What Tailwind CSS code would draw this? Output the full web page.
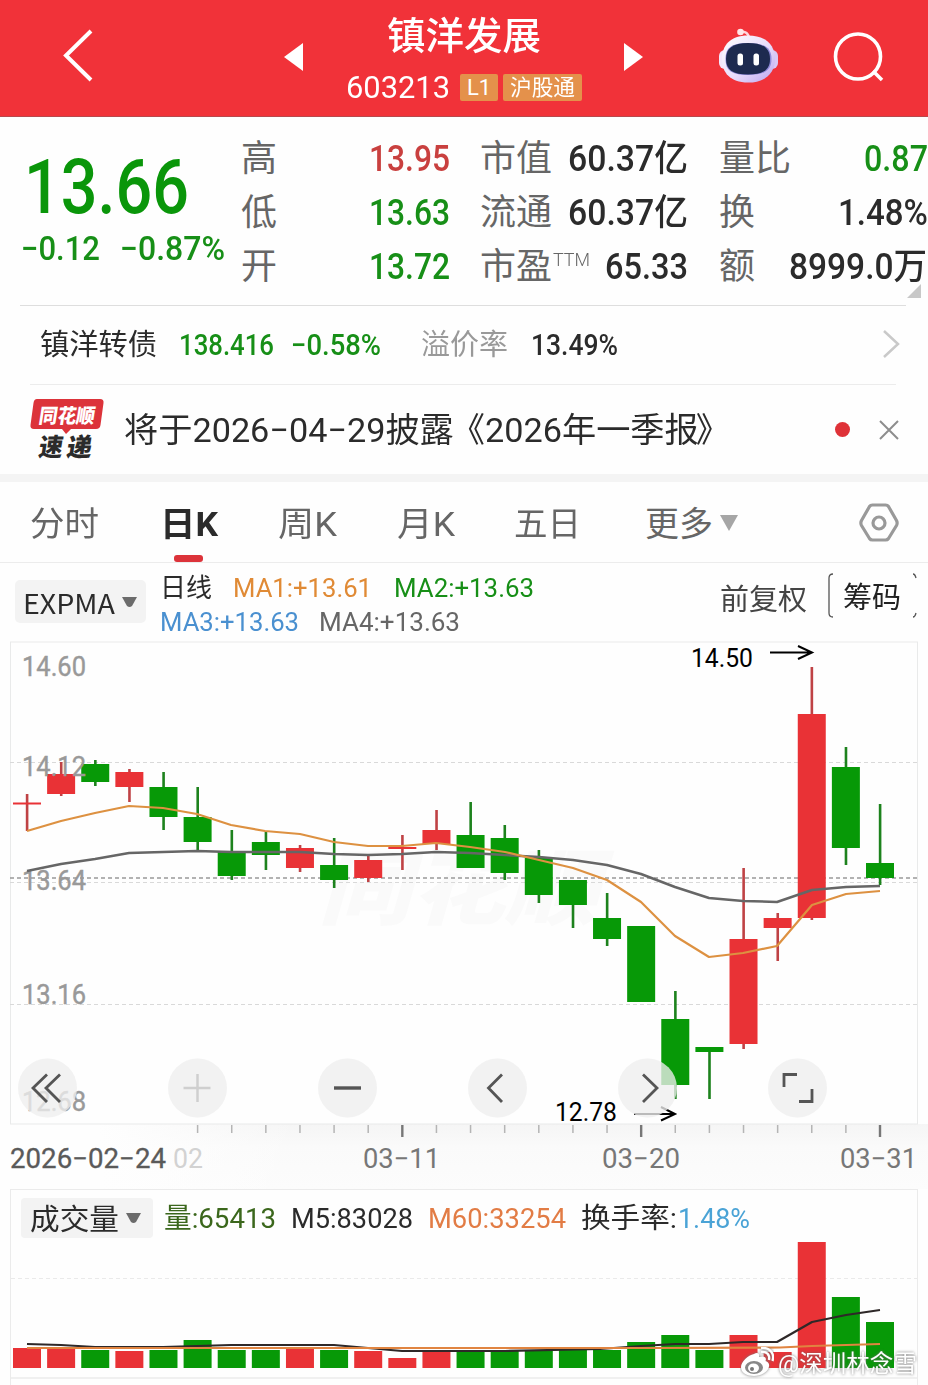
<!DOCTYPE html>
<html lang="zh-CN">
<head>
<meta charset="utf-8">
<title>镇洋发展 603213</title>
<script src="https://cdn.jsdelivr.net/npm/@tailwindcss/browser@4"></script>
</head>
<body class="w-[928px] h-[1385px] overflow-hidden bg-[#fefefe] text-[#2b2b2b] font-['Roboto','Noto_Sans_CJK_SC',sans-serif] whitespace-nowrap">

<header class="h-[117px] bg-[#f13239] text-white flex border-b border-[#b8484c]">
  <div class="w-[284px] pl-[60px] pt-[26px]">
    <svg class="w-9 h-[60px]" viewBox="0 0 36 60" fill="none" stroke="#fff" stroke-width="4"><path d="M31 5 6 29.500 31 54"/></svg>
  </div>
  <div class="w-[62px] pt-[43px]"><svg class="w-5 h-7" viewBox="0 0 20 28"><path d="M19 0v28L0 14z" fill="#fff"/></svg></div>
  <div class="w-[240px]">
    <div class="h-[60px] pt-[10px] pl-[41px] text-[38px] leading-[52px] font-medium"><span data-w="154">镇洋发展</span></div>
    <div class="flex items-center h-[54px]">
      <span data-w="104" class="text-[32px] leading-[56px]">603213</span>
      <span class="ml-[10px] w-[38px] h-[27px] shrink-0 rounded-[2px] bg-[#e4914b] text-[22px] leading-[27px] text-center">L1</span>
      <span class="ml-[5px] w-[79px] h-[27px] shrink-0 rounded-[2px] bg-[#e4914b] text-[22px] leading-[27px] pl-[7px]"><span data-w="65">沪股通</span></span>
    </div>
  </div>
  <div class="w-[130px] pl-[37px] pt-[43px]"><svg class="w-5 h-7" viewBox="0 0 20 28"><path d="M1 0v28L20 14z" fill="#fff"/></svg></div>
  <div class="w-[114px] pt-[26px]">
    <svg class="w-[64px] h-[60px]" viewBox="716 26 64 60">
      <defs><linearGradient id="shell" x2="1" y2="1"><stop offset="0" stop-color="#fff"/><stop offset=".55" stop-color="#e9dcfb"/><stop offset="1" stop-color="#b9a4ee"/></linearGradient></defs>
      <path d="M741 32q6-1 8 5" fill="none" stroke="#ffd5dc" stroke-width="2.500"/>
      <circle cx="740.500" cy="32" r="3.300" fill="#ffe6e8"/>
      <rect x="719" y="50" width="12" height="19" rx="6" fill="#f3e6fb"/>
      <rect x="766" y="50" width="12" height="19" rx="6" fill="#d9c8f5"/>
      <path d="M748 35.500c18 0 27 10 27 23.500s-9 23.500-27 23.500-26-10-26-23.500 8-23.500 26-23.500z" fill="url(#shell)"/>
      <path d="M748 43c17 0 23.500 5 23.500 16S765 75 748 75s-22.500-5-22.500-16S731 43 748 43z" fill="#8f8ad8"/>
      <path d="M748 43c15 0 22 5 22 16s-7 15.500-22 15.500S726 70 726 59s7-16 22-16z" fill="#1d2a4f"/>
      <rect x="737.500" y="53.500" width="5.500" height="12" rx="2.500" fill="#fff"/>
      <rect x="753.500" y="53.500" width="5.500" height="12" rx="2.500" fill="#fff"/>
    </svg>
  </div>
  <div class="pt-[30px]"><svg class="w-14 h-14" viewBox="830 30 56 56" fill="none" stroke="#fff" stroke-width="3.600"><circle cx="858" cy="56.500" r="22.500"/><path d="m873 71 9 9"/></svg></div>
</header>

<section class="h-[188px] flex text-[36px] leading-[54px] pt-[15px]">
  <div class="w-[241px] shrink-0">
    <div class="pl-[24px] pt-[17px] h-[88px] text-[76px] leading-[76px] font-medium text-[#0a960a]"><span data-w="165">13.66</span></div>
    <div class="flex pl-[21px] h-[54px] text-[33px] leading-[58px] text-[#178f17] font-medium"><span data-w="79">−0.12</span><span class="ml-[20px]" data-w="105">−0.87%</span></div>
  </div>
  <div class="w-[39px] shrink-0 text-[#666]"><div>高</div><div>低</div><div>开</div></div>
  <div class="w-[170px] shrink-0 font-medium text-[#178f17] pl-[89px]">
    <div class="flex"><span data-w="81" class="text-[#c9403f]">13.95</span></div><div class="flex"><span data-w="81">13.63</span></div><div class="flex"><span data-w="81">13.72</span></div>
  </div>
  <div class="w-[238px] shrink-0 pl-[30px]">
    <div class="flex justify-between"><span class="text-[#666]">市值</span><span data-w="120" class="font-medium">60.37亿</span></div>
    <div class="flex justify-between"><span class="text-[#666]">流通</span><span data-w="120" class="font-medium">60.37亿</span></div>
    <div class="flex justify-between"><span class="text-[#666] flex">市盈<span class="text-[19px] leading-[40px] pl-[1px] font-light" data-w="38">TTM</span></span><span data-w="83" class="font-medium">65.33</span></div>
  </div>
  <div class="w-[240px] shrink-0 pl-[31px] relative">
    <div class="flex justify-between"><span class="text-[#666]">量比</span><span data-w="64" class="font-medium text-[#178f17]">0.87</span></div>
    <div class="flex justify-between"><span class="text-[#666]">换</span><span data-w="90" class="font-medium">1.48%</span></div>
    <div class="flex justify-between pr-[1px]"><span class="text-[#666]">额</span><span data-w="138" class="font-medium">8999.0万</span></div>
    <svg class="absolute right-[7px] top-[152px] w-[14px] h-[14px]" viewBox="0 0 14 14"><path d="M14 0v14H0z" fill="#c8c8c8"/></svg>
  </div>
</section>

<section class="ml-[20px] mr-[22px] h-[79px] border-t border-[#dedede] flex items-center text-[29px] pl-[20px] leading-[76px]">
  <span data-w="117">镇洋转债</span>
  <span data-w="95" class="ml-[22px] text-[29px] font-medium text-[#178f17]">138.416</span>
  <span data-w="90" class="ml-[17px] text-[29px] font-medium text-[#178f17]">−0.58%</span>
  <span data-w="87" class="ml-[40px] text-[#999]">溢价率</span>
  <span data-w="87" class="ml-[23px] text-[29px] font-medium">13.49%</span>
  <svg class="ml-auto mr-[6px] w-[18px] h-[32px]" viewBox="0 0 18 32" fill="none" stroke="#c9c9c9" stroke-width="2.500"><path d="m2 2 14 13L2 28"/></svg>
</section>

<section class="ml-[30px] mr-[32px] h-[90px] border-t border-[#ececec] flex items-center">
  <svg class="w-[74px] h-[64px] shrink-0" viewBox="30 398 74 64">
    <path d="M37 399h63q4 0 3.500 4l-3 22q-.5 4-4.500 4H71l-5 5-4-5H34q-4 0-3.500-4l3-22q.5-4 3.500-4z" fill="#dc333a"/>
    <g transform="skewX(-9)" font-family="Noto Sans CJK SC" font-weight="900">
      <text x="105" y="423" font-size="20" textLength="56" lengthAdjust="spacingAndGlyphs" fill="#fff">同花顺</text>
      <text x="110" y="456" font-size="25" fill="#2b2b2b" textLength="24" lengthAdjust="spacingAndGlyphs">速</text>
      <text x="138" y="456" font-size="25" fill="#2b2b2b" textLength="25" lengthAdjust="spacingAndGlyphs">递</text>
    </g>
  </svg>
  <span data-w="606" class="ml-[20px] text-[34px] leading-[86px] pt-[1px]">将于2026−04−29披露<span class="-ml-[3px]">《</span>2026年一季报<span class="-ml-[3px]">》</span></span>
  <span class="ml-auto w-[15px] h-[15px] rounded-full bg-[#df3238]"></span>
  <svg class="ml-[28px] w-[22px] h-[22px] mr-[-4px]" viewBox="0 0 22 22" stroke="#8d8d8d" stroke-width="2"><path d="m2 2 18 18M20 2 2 20"/></svg>
</section>

<div class="h-[8px] bg-[#f4f4f4]"></div>

<nav class="h-[81px] border-b border-[#ececec] flex text-[34px] leading-[85px] text-[#666] relative pl-[30px]">
  <span data-w="69">分时</span>
  <span data-w="58" class="ml-[61px] font-bold text-[#2b2b2b]">日K</span>
  <span data-w="59" class="ml-[60px]">周K</span>
  <span data-w="58" class="ml-[60px]">月K</span>
  <span data-w="67" class="ml-[59px]">五日</span>
  <span data-w="68" class="ml-[64px]">更多</span>
  <svg class="ml-[7px] mt-[33px] w-[18px] h-[16px]" viewBox="0 0 18 16"><path d="M0 0h18L9 16z" fill="#a6a6a6"/></svg>
  <svg class="ml-auto mr-[28px] mt-[20px] w-[42px] h-[42px]" viewBox="0 0 42 42" fill="none" stroke="#999" stroke-width="3.200" stroke-linejoin="round"><path d="M11.500 4.500q1-1.500 3-1.500h13q2 0 3 1.500l8 14q1.300 2.500 0 5l-8 13q-1 1.500-3 1.500h-13q-2 0-3-1.500l-8-13q-1.300-2.500 0-5z"/><circle cx="21" cy="21" r="6"/></svg>
  <i class="absolute left-[174px] bottom-0 w-[29px] h-[7px] rounded-[3px] bg-[#dc333a]"></i>
</nav>

<section class="h-[78px] flex">
  <div class="mt-[17px] ml-[15px] w-[131px] h-[43px] rounded-[5px] bg-[#f3f3f3] flex items-center pl-[8px]">
    <span data-w="92" class="text-[27px] leading-[43px] pt-[1px] font-['Noto_Sans_CJK_SC']">EXPMA</span>
    <svg class="ml-[7px] w-[15px] h-[11px] mt-[1px]" viewBox="0 0 15 11"><path d="M0 0h15l-5 9q-2.500 2-5 0z" fill="#6b6b6b"/></svg>
  </div>
  <div class="ml-[14px] w-[560px] pt-[8px] text-[26px]">
    <div class="flex h-[34px] leading-[34px]"><span data-w="52">日线</span><span data-w="139" class="ml-[21px] text-[#e08a35]">MA1:+13.61</span><span data-w="140" class="ml-[22px] text-[#178f17]">MA2:+13.63</span></div>
    <div class="flex h-[34px] leading-[34px]"><span data-w="139" class="text-[#4a90d0]">MA3:+13.63</span><span data-w="141" class="ml-[20px] text-[#666]">MA4:+13.63</span></div>
  </div>
  <span data-w="87" class="text-[29px] leading-[74px] text-[#444]">前复权</span>
  <div class="ml-[21px] mt-[10px] w-[90px] h-[46px] relative">
    <svg class="absolute inset-0" width="90" height="46" fill="none" stroke="#555" stroke-width="1.300"><path d="M5 1Q1 1 1 5v35q0 4 4 4M85 1q2 0 3 4M85 44q2 0 3-4"/></svg>
    <span class="block pl-[15px] text-[29px] leading-[50px] text-[#222]"><span data-w="58">筹码</span></span>
  </div>
</section>

<section class="h-[548px]">
  <svg id="kline" class="block" width="928" height="548" viewBox="0 641 928 548" font-family="Roboto, Noto Sans CJK SC, sans-serif">
    <defs>
      <linearGradient id="fade" x2="0" y2="1"><stop offset="0" stop-color="#f5f5f5"/><stop offset=".35" stop-color="#fafafa"/><stop offset="1" stop-color="#fcfcfc"/></linearGradient>
      <linearGradient id="cover"><stop offset="0" stop-color="#fefefe"/><stop offset="1" stop-color="#fefefe" stop-opacity="0"/></linearGradient>
    </defs>
    <rect x="100" y="1124" width="828" height="65" fill="url(#fade)"/>
    <rect x="99" y="1123" width="200" height="67" fill="url(#cover)"/>
    <text x="318" y="918" font-size="82" font-weight="900" font-style="italic" fill="#fafafa" textLength="280" lengthAdjust="spacingAndGlyphs">同花顺</text>
    <rect x="10.500" y="642" width="907" height="482" fill="none" stroke="#e9eaea"/>
    <g stroke="#d9d9d9" stroke-dasharray="4 3"><path d="M10 762.500H917M10 882.500H917M10 1004.500H917"/></g>
    <path d="M10 878H917" stroke="#999" stroke-width="1.400" stroke-dasharray="4 3"/>
    <g id="candles"></g>
    <g font-size="27" fill="#999" stroke="#999" stroke-width=".4">
      <text x="22" y="675.500" textLength="64" lengthAdjust="spacingAndGlyphs">14.60</text>
      <text x="22" y="775.500" textLength="64" lengthAdjust="spacingAndGlyphs">14.12</text>
      <text x="22" y="889.500" textLength="64" lengthAdjust="spacingAndGlyphs">13.64</text>
      <text x="22" y="1003.500" textLength="64" lengthAdjust="spacingAndGlyphs">13.16</text>
      <text x="22" y="1110.500" textLength="64" lengthAdjust="spacingAndGlyphs">12.68</text>
    </g>
    <g fill="none" stroke-linejoin="round">
      <polyline stroke="#666" stroke-width="2.500" points="27,871 61,864 95,859 129,853 163,852 197,851 231,852 300,852 334,854 368,855 402,854 436,852 470,853 505,855 539,857 573,860 607,865 641,874 675,887 709,898 743,901 777,902 812,890 846,887 880,886"/>
      <polyline stroke="#dd9141" stroke-width="2.200" points="27,831 61,821 95,813 129,806 163,808 197,814 231,825 265,831 300,834 334,842 368,846 402,846 436,843 470,847 505,852 539,860 573,868 607,880 641,902 675,936 709,957 743,953 777,946 812,905 846,894 880,891"/>
    </g>
    <g font-size="25" fill="#000">
      <text x="691" y="667" textLength="62" lengthAdjust="spacingAndGlyphs">14.50</text>
      <text x="555" y="1120.500" textLength="62" lengthAdjust="spacingAndGlyphs">12.78</text>
    </g>
    <g fill="none" stroke="#000" stroke-width="2"><path d="M770 652.500h41M798 646l14 6.500-14 6.500M634 1114h41M661 1107l14 7-14 6.500"/></g>
    <g fill="#eee" fill-opacity=".78">
      <circle cx="47.500" cy="1088" r="29.500"/><circle cx="197.500" cy="1088" r="29.500"/><circle cx="347.500" cy="1088" r="29.500"/><circle cx="497.500" cy="1088" r="29.500"/><circle cx="647.500" cy="1088" r="29.500"/><circle cx="797.500" cy="1088" r="29.500"/>
    </g>
    <g fill="none" stroke="#555" stroke-width="2.800">
      <path d="M47 1074.500 33 1088l14 14M60 1074.500 46 1088l14 14"/>
      <path stroke="#cfcfcf" stroke-width="2.500" d="M183.500 1088h27M197.500 1074v28"/>
      <path stroke-width="3.400" d="M334 1088h27"/>
      <path d="M502 1074.500 488.500 1088l13.500 14M643 1074.500l14 13.500-14 14"/>
      <path d="M784 1087v-12.500h13M799 1101.500h13V1089"/>
    </g>
    <g id="ticks"></g>
    <g font-size="27" fill="#777">
      <text x="10" y="1168" fill="#5a5a5a" stroke="#5a5a5a" stroke-width=".3" textLength="156" lengthAdjust="spacingAndGlyphs">2026−02−24</text>
      <text x="173" y="1168" fill="#d2d2d2" textLength="30" lengthAdjust="spacingAndGlyphs">02</text>
      <text x="363" y="1168" textLength="77" lengthAdjust="spacingAndGlyphs">03−11</text>
      <text x="602" y="1168" textLength="78" lengthAdjust="spacingAndGlyphs">03−20</text>
      <text x="840" y="1168" textLength="77" lengthAdjust="spacingAndGlyphs">03−31</text>
    </g>
  </svg>
</section>

<section class="ml-[10px] mr-[10px] h-[196px] border border-b-0 border-[#ebebeb] relative">
  <div class="h-[56px] flex items-center text-[28px] leading-[58px] pl-[10px]">
    <div class="w-[132px] h-[40px] shrink-0 rounded-[4px] bg-[#f3f3f3] flex items-center pl-[9px]"><span data-w="89" class="text-[29px] leading-[40px] pt-[3px]">成交量</span><svg class="ml-[7px] w-[15px] h-[11px]" viewBox="0 0 15 11"><path d="M0 0h15l-5 9q-2.500 2-5 0z" fill="#6b6b6b"/></svg></div>
    <span data-w="112" class="ml-[11px] pt-[2px] text-[#3b671c]">量:65413</span>
    <span data-w="122" class="ml-[15px] pt-[2px]">M5:83028</span>
    <span data-w="138" class="ml-[15px] pt-[2px] text-[#e27c45]">M60:33254</span>
    <span data-w="96" class="ml-[15px] pt-[2px]">换手率:</span>
    <span data-w="72" class="ml-[1px] pt-[2px] text-[#4aa3d6]">1.48%</span>
  </div>
  <svg id="volume" class="block overflow-visible" width="906" height="139" viewBox="11 1246 906 139">
    <path d="M11 1278.500H917" stroke="#eaeaea" stroke-dasharray="4 3"/>
    <path d="M11 1378H917" stroke="#ebebeb" stroke-width="1.500"/>
    <g id="bars"></g>
    <g fill="none" stroke-linejoin="round" stroke-width="2.200">
      <polyline stroke="#2e2828" points="27,1344 61,1345 95,1347 163,1347 197,1346 231,1345 334,1345 368,1348 402,1351 505,1351 600,1349 641,1346 675,1344 709,1344 743,1342 777,1342 812,1322 846,1315 880,1310"/>
      <polyline stroke="#e08440" points="27,1348 650,1348 780,1347.500 812,1346 880,1344"/>
    </g>
  </svg>
  <div class="absolute left-[729px] top-[154px] flex items-center text-white [text-shadow:0_0_3px_#666]">
    <svg class="w-[34px] h-[32px] shrink-0" viewBox="0 0 34 32"><g style="filter:drop-shadow(0 0 1.500px #777)"><path d="M14 7c3-2 6-1 5 3 5-1.500 8 0 6.500 4 3 1 4 3 3.500 5.500C28 25 21 29 14 29S1 26 1 20C1 15 8 8 14 7z" fill="#fff"/><path d="M21 5c6-1 9 3 8 8M21 1c9-1 14 6 11.500 13" fill="none" stroke="#fff" stroke-width="2.400"/></g><ellipse cx="14" cy="20.500" rx="9" ry="6.500" fill="#888"/><ellipse cx="13.500" cy="21" rx="5.500" ry="4.500" fill="#fff"/><circle cx="12" cy="22" r="2" fill="#777"/></svg>
    <span data-w="139" class="ml-[4px] pt-[2px] text-[24px] leading-[36px]">@深圳林念雪</span>
  </div>
</section>

<script>
// [direction, body top, body bottom, high, low, volume top]
const days = [
  ['r',802.5,804.5,794,831,1348],['r',774,794,762,796,1347],['g',764,782,760,786,1350],['r',772,787,769,802,1351],
  ['g',787,817,772,830,1350],['g',817,842,787,850,1340],['g',852,876,830,880,1350],['g',842,855,832,870,1350],
  ['r',848,868,845,872,1349],['g',865,880,838,888,1350],['r',860,878,856,882,1351],['r',847,849,835,870,1358],
  ['r',830,844,810,850,1351],['g',835,868,802,868,1350],['g',838,873,825,880,1350],['g',858,895,850,903,1350],
  ['g',880,905,880,928,1350],['g',918,939,893,946,1350],['g',926,1002,926,1002,1342],['g',1019,1085,991,1099,1335],
  ['g',1047,1052,1047,1099,1350],['r',939,1044,868,1049,1335],['r',918,928,913,961,1352],['r',714,918,667,920,1242],
  ['g',767,848,747,865,1297],['g',863,878,804,885,1322]
];
const color = { r: '#e93236', g: '#079907' }, wick = { r: '#bf4245', g: '#1d821d' };
let candles = '', bars = '', ticks = '';
days.forEach(([d, top, bottom, high, low, vol], i) => {
  const x = 27 + i * 34.12;
  candles += `<rect x="${x - 1.2}" y="${high}" width="2.6" height="${low - high}" fill="${wick[d]}"/><rect x="${x - 14}" y="${top}" width="28" height="${bottom - top}" fill="${color[d]}"/>`;
  bars += `<rect x="${x - 14}" y="${vol}" width="28" height="${1368 - vol}" fill="${color[d]}"/>`;
  if (i > 4) {
    const major = i === 11 || i === 18 || i === 25;
    ticks += `<path d="M${x} 1125v${major ? 12 : 8}" stroke="${major ? '#777' : '#b5b5b5'}" stroke-width="${major ? 2.4 : 1.5}"/>`;
  }
});
document.getElementById('candles').innerHTML = candles;
document.getElementById('bars').innerHTML = bars;
document.getElementById('ticks').innerHTML = ticks;
// Condense each label horizontally to its column width, again whenever its own size changes.
const fit = el => {
  const natural = parseFloat(getComputedStyle(el).width), target = +el.dataset.w;
  el.style.transform = `scaleX(${target / natural})`;
  el.style.marginRight = `${target - natural}px`;
};
const observer = new ResizeObserver(entries => entries.forEach(e => fit(e.target)));
document.querySelectorAll('[data-w]').forEach(el => {
  el.style.display = 'block';
  el.style.width = 'max-content';
  el.style.flexShrink = 0;
  el.style.transformOrigin = '0 50%';
  fit(el);
  observer.observe(el);
});
addEventListener('load', () => document.querySelectorAll('[data-w]').forEach(fit));
</script>
</body>
</html>
